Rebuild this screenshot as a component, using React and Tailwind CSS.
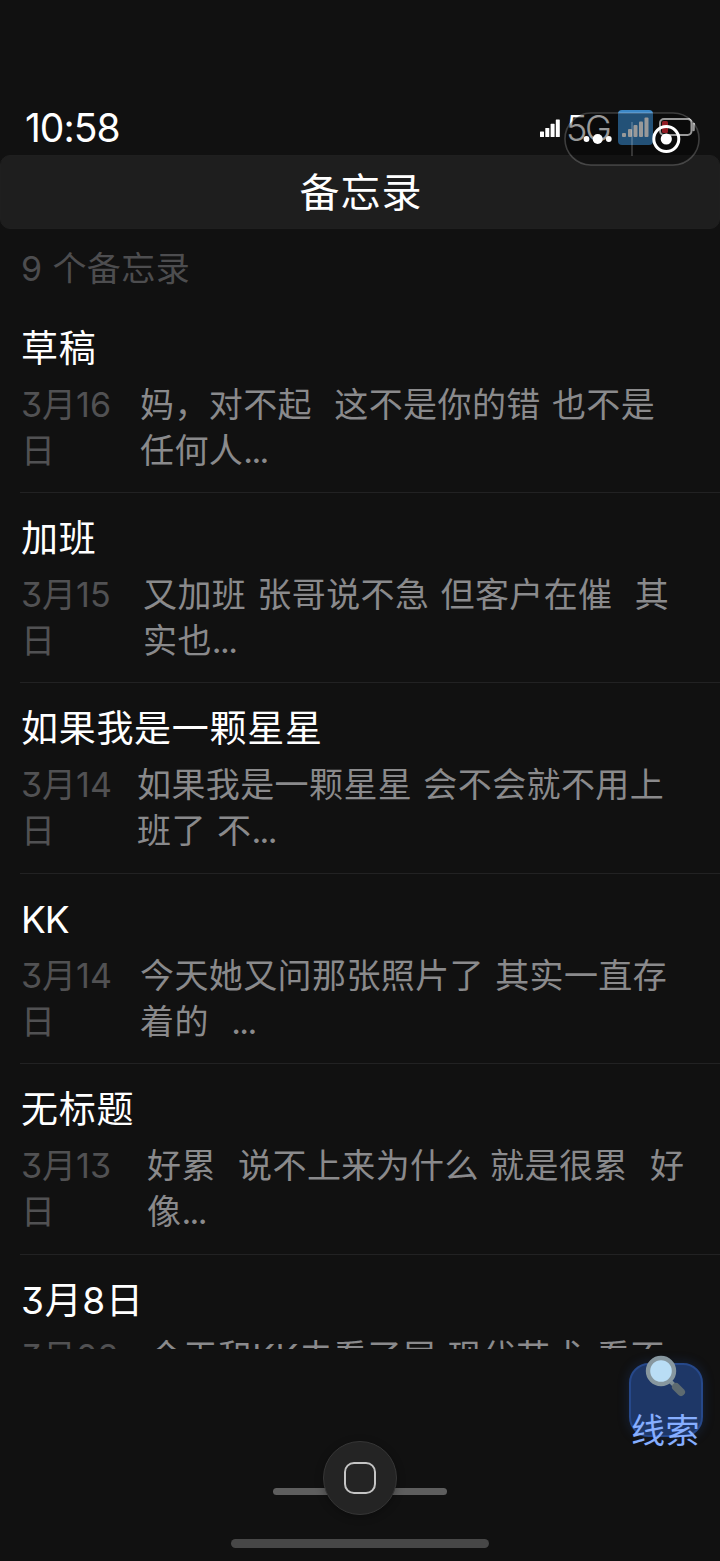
// MemoApp.jsx
import React from 'react';

const memos = [
  { title: '草稿', date: '3月16\n日', col: 'w-[119px]', text: '妈，对不起  这不是你的错 也不是\n任何人...' },
  { title: '加班', date: '3月15\n日', col: 'w-[122px]', text: '又加班 张哥说不急 但客户在催  其\n实也...' },
  { title: '如果我是一颗星星', date: '3月14\n日', col: 'w-[116px]', text: '如果我是一颗星星 会不会就不用上\n班了 不...' },
  { title: 'KK', date: '3月14\n日', col: 'w-[119px]', text: '今天她又问那张照片了 其实一直存\n着的  ...' },
  { title: '无标题', date: '3月13\n日', col: 'w-[126px]', text: '好累  说不上来为什么 就是很累  好\n像...' },
  { title: '3月8日', date: '3月08', col: 'w-[128px]', text: '今天和KK去看了展 现代艺术 看不' },
];

const SignalBars = ({ className }) => (
  <svg viewBox="0 0 20 18" preserveAspectRatio="none" className={className} fill="currentColor">
    <rect x="0" y="12.5" width="4" height="5.5" rx="0.6" />
    <rect x="5.3" y="9" width="4" height="9" rx="0.6" />
    <rect x="10.6" y="4.8" width="4" height="13.2" rx="0.6" />
    <rect x="15.8" y="0.5" width="4" height="17.5" rx="0.6" />
  </svg>
);

const StatusBar = () => (
  <div className="relative h-[155px] shrink-0 pt-[101px] pl-[25px] pr-[25px] flex justify-between">
    <span className="text-[39px] leading-[54px] tracking-[-1px] text-white">10:58</span>
    <div className="flex items-start">
      <SignalBars className="w-5 h-[18px] mt-[18px] mr-[6px] text-white" />
      <span className="w-[44px] mr-[8px] text-[36px] leading-[54px] tracking-[-2.4px] font-light text-white">5G</span>
      <div className="w-[35px] h-[35px] mt-[9px] mr-[6px] rounded-[4px] bg-[#3b87c6]">
        <svg viewBox="0 0 35 35" className="w-full h-full" fill="#fff">
          <rect x="4" y="23" width="4" height="4" rx="1" />
          <rect x="10" y="19" width="4" height="8" rx="1" />
          <rect x="15.5" y="15" width="4" height="12" rx="1" />
          <rect x="21" y="11.5" width="4" height="15.5" rx="1" />
          <rect x="26.5" y="7.5" width="4" height="19.5" rx="1" />
        </svg>
      </div>
      <svg viewBox="0 0 36 18" className="w-9 h-[18px] mt-[17px]" fill="none">
        <rect x="1" y="1" width="31.5" height="16" rx="4" stroke="#fff" strokeWidth="2" />
        <rect x="3" y="3" width="6" height="12" rx="1.5" fill="#f0303c" />
        <path d="M34.5 6v6" stroke="#fff" strokeWidth="2.6" strokeLinecap="round" />
      </svg>
    </div>
  </div>
);

// capsule menu floating over the status bar
const Capsule = () => (
  <svg viewBox="0 0 136 54" className="absolute z-10 left-[564px] top-[112px] w-[136px] h-[54px]" fill="none">
    <rect x="1" y="1" width="134" height="52" rx="26" fill="#000" fillOpacity="0.4" stroke="#fff" strokeOpacity="0.2" strokeWidth="1.6" />
    <circle cx="22.5" cy="27" r="2.9" fill="#fff" />
    <circle cx="33.7" cy="27" r="5" fill="#fff" />
    <circle cx="44.8" cy="27" r="2.9" fill="#fff" />
    <path d="M68 10v34" stroke="#fff" strokeOpacity="0.25" strokeWidth="1.4" />
    <circle cx="102.3" cy="27" r="12.5" stroke="#fff" strokeWidth="3" />
    <circle cx="102.3" cy="27" r="5.6" fill="#fff" />
  </svg>
);

const MemoText = ({ text }) => {
  const more = text.endsWith('...');
  return (
    <p className="[word-spacing:1.2px] text-[#8a8a8c]">
      {more ? text.slice(0, -3) : text}
      {more && <span className="tracking-[-1.6px]">...</span>}
    </p>
  );
};

const MemoRow = ({ memo }) => (
  <div className="h-[190.4px] shrink-0 ml-5 pl-px pt-[21px] border-b border-[#222223]">
    <h2 className="text-[37px] leading-[50px] tracking-[0.7px] text-white">
      {memo.title === 'KK' ? <span className="tracking-[-1px]">KK</span> : memo.title}
    </h2>
    <div className="mt-[8px] flex whitespace-pre text-[34px] leading-[46px] tracking-[0.4px]">
      <p className={`${memo.col} shrink-0 tracking-[0px] text-[#515153]`}>{memo.date}</p>
      <MemoText text={memo.text} />
    </div>
  </div>
);

const ClueButton = () => (
  <div className="absolute left-[629px] top-[1363px] w-[74px] h-[74px] rounded-[20px] border-2 border-[#26488a] bg-[#1e3767] shadow-[0_0_12px_rgba(40,90,190,0.25)]">
    <svg viewBox="0 0 42 42" className="absolute left-[14px] top-[-10px] w-[42px] h-[42px]" fill="none">
      <path d="M26 27l3.5 3.5" stroke="#7d8d94" strokeWidth="4" />
      <path d="M31 32l5 5" stroke="#5d6a70" strokeWidth="8" strokeLinecap="round" />
      <circle cx="16" cy="16" r="13" fill="#b9ddf5" stroke="#87979f" strokeWidth="4.4" />
    </svg>
    <span className="absolute left-0 top-[43px] whitespace-nowrap text-[34px] leading-[46px] tracking-[0.4px] text-[#86aeff]">线索</span>
  </div>
);

const HomeBar = () => (
  <div className="flex flex-col items-center pt-[92px]">
    <div className="relative w-[174px] h-[74px] flex items-center justify-center">
      <div className="absolute left-0 top-[47px] w-full h-[7px] rounded-full bg-[#5e5e5e]" />
      <div className="relative w-[74px] h-[74px] rounded-full border border-[#363636] bg-[#242424] flex items-center justify-center shadow-[0_2px_8px_rgba(0,0,0,0.3)]">
        <div className="w-8 h-8 rounded-[10px] border-[2.5px] border-[#c4c4c4]" />
      </div>
    </div>
    <div className="mt-6 w-[258px] h-[9px] rounded-full bg-[#474747]" />
  </div>
);

const App = () => {
  return (
    <div className="relative w-[720px] h-[1561px] overflow-hidden flex flex-col bg-[#111111] font-['Inter','Noto_Sans_CJK_SC',sans-serif] [font-feature-settings:'cv09']">
      <StatusBar />
      <Capsule />
      <header className="h-[74px] shrink-0 rounded-[10px] border border-[#1f1f1f] bg-[#1e1e1e] flex items-center justify-center">
        <h1 className="text-[40px] leading-[56px] tracking-[1px] pl-[2px] pt-px text-white">备忘录</h1>
      </header>
      <main className="h-[1120px] shrink-0 overflow-hidden flex flex-col">
        <div className="h-[73.6px] shrink-0 pl-[21px] pt-[17px] text-[34px] leading-[46px] tracking-[0.4px] text-[#4d4d4f]">9 个备忘录</div>
        {memos.map((m, i) => <MemoRow key={i} memo={m} />)}
      </main>
      <HomeBar />
      <ClueButton />
    </div>
  );
};

export default App;
